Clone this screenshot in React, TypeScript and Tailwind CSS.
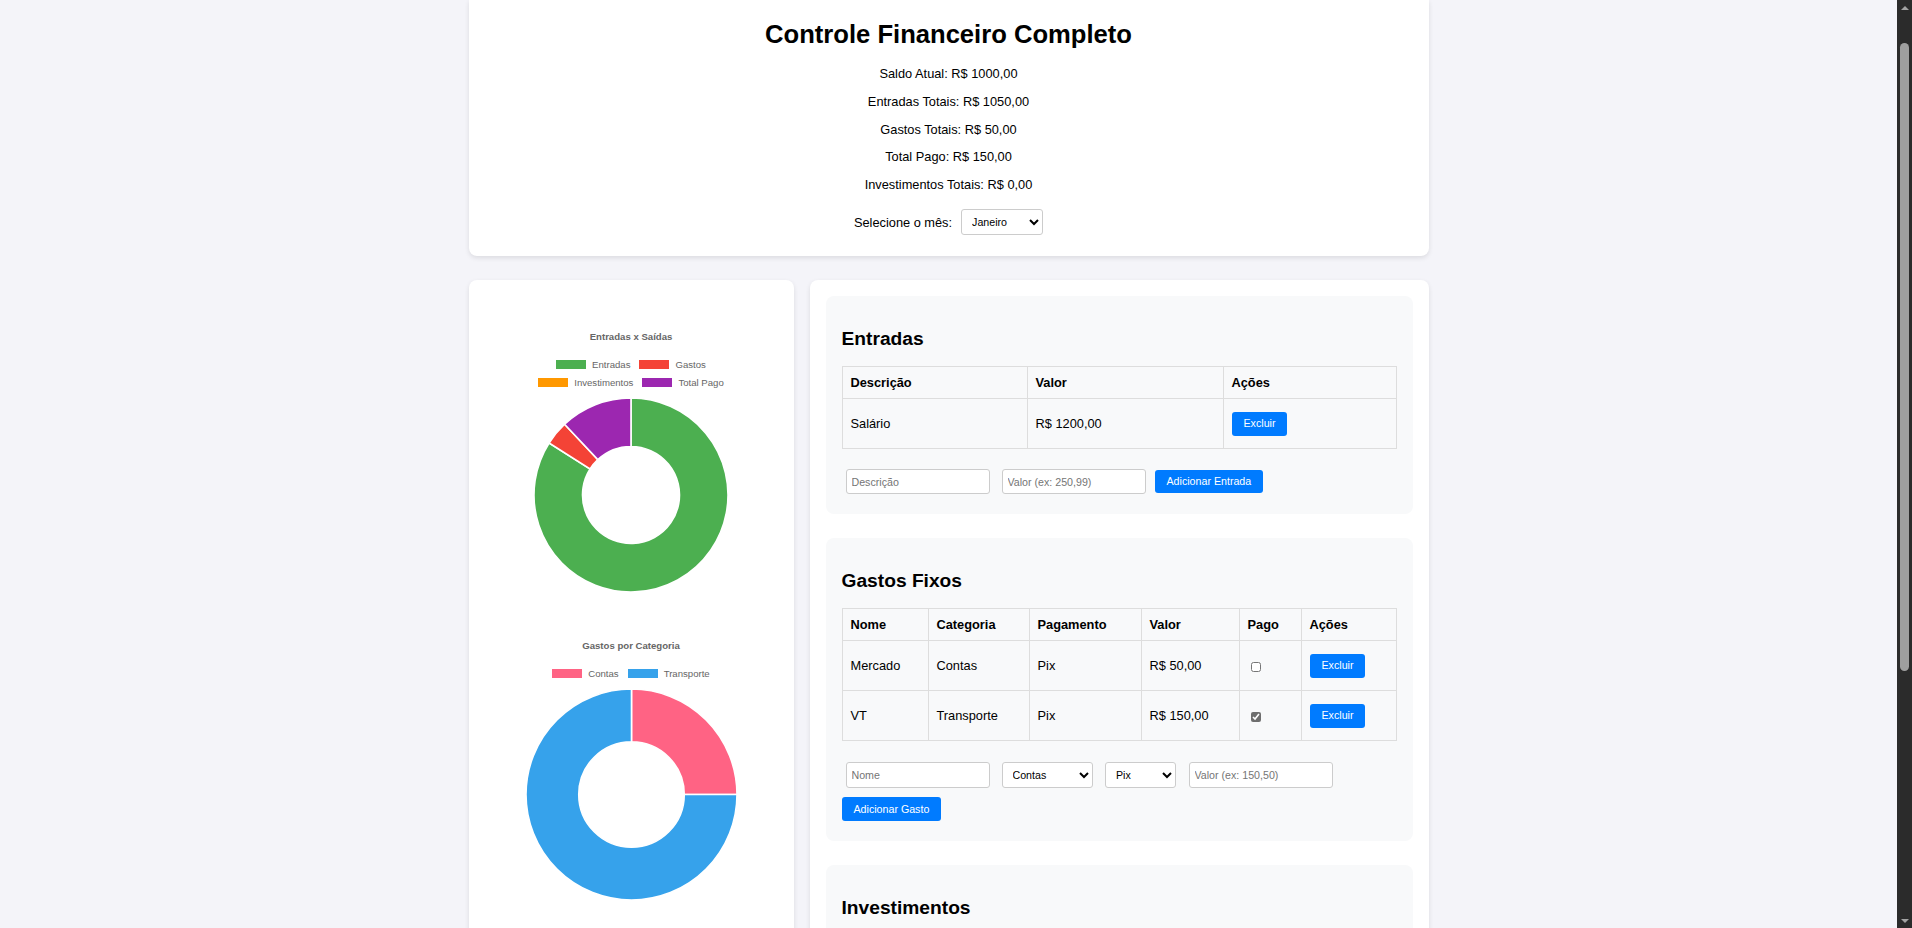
import React from "react";

type Slice = { label: string; value: number; color: string };

const resumo = [
  "Saldo Atual: R$ 1000,00",
  "Entradas Totais: R$ 1050,00",
  "Gastos Totais: R$ 50,00",
  "Total Pago: R$ 150,00",
  "Investimentos Totais: R$ 0,00",
];

const gastos = [
  { nome: "Mercado", categoria: "Contas", pagamento: "Pix", valor: "R$ 50,00", pago: false },
  { nome: "VT", categoria: "Transporte", pagamento: "Pix", valor: "R$ 150,00", pago: true },
];

function arcPath(cx: number, cy: number, r: number, ir: number, a0: number, a1: number) {
  const large = a1 - a0 > Math.PI ? 1 : 0;
  const pt = (rad: number, a: number) =>
    `${(cx + rad * Math.cos(a)).toFixed(2)} ${(cy + rad * Math.sin(a)).toFixed(2)}`;
  return `M ${pt(r, a0)} A ${r} ${r} 0 ${large} 1 ${pt(r, a1)} L ${pt(ir, a1)} A ${ir} ${ir} 0 ${large} 0 ${pt(ir, a0)} Z`;
}

function Donut({ data, size }: { data: Slice[]; size: number }) {
  const total = data.reduce((s, d) => s + d.value, 0);
  const r = size / 2 - 1;
  const c = size / 2;
  let a = -Math.PI / 2;
  return (
    <svg width={size} height={size} viewBox={`0 0 ${size} ${size}`}>
      {data.map((d) => {
        if (!d.value) return null;
        const a0 = a;
        const a1 = a + (d.value / total) * Math.PI * 2;
        a = a1;
        return (
          <path
            key={d.label}
            d={arcPath(c, c, r, r / 2, a0, a1)}
            fill={d.color}
            stroke="#fff"
            strokeWidth={1.6}
          />
        );
      })}
    </svg>
  );
}

function Legend({ items }: { items: Slice[] }) {
  return (
    <div className="flex items-center justify-center gap-[9px] h-[11.5px]">
      {items.map((d) => (
        <div key={d.label} className="flex items-center gap-[6px]">
          <span className="w-[30px] h-[9px]" style={{ backgroundColor: d.color }} />
          <span className="text-[9.6px] leading-[11.5px] text-[#666]">{d.label}</span>
        </div>
      ))}
    </div>
  );
}

function Chart({ title, rows, size }: { title: string; rows: Slice[][]; size: number }) {
  return (
    <div className="flex flex-col items-center h-[259px]">
      <div className="text-[9.6px] leading-[11.5px] font-bold text-[#666]">{title}</div>
      <div className="mt-[16px] flex flex-col gap-[6.5px]">
        {rows.map((row, i) => (
          <Legend key={i} items={row} />
        ))}
      </div>
      <div className="mt-[8.5px]">
        <Donut data={rows.flat()} size={size} />
      </div>
    </div>
  );
}

function Btn({ children }: { children: React.ReactNode }) {
  return (
    <button className="h-[24px] px-[12px] rounded-[3px] bg-[#007bff] text-white text-[10.67px] leading-none whitespace-nowrap">
      {children}
    </button>
  );
}

function Field({ placeholder }: { placeholder: string }) {
  return (
    <input
      placeholder={placeholder}
      className="w-[144px] h-[25px] border border-[#ccc] rounded-[3px] bg-white px-[5px] text-[10.67px] placeholder:text-[#757575] outline-none"
    />
  );
}

function Select({ options, width }: { options: string[]; width: string }) {
  return (
    <select
      className={`${width} h-[26px] border border-[#ccc] rounded-[3px] bg-white pl-[6px] pr-[2px] text-[10.67px] text-black`}
    >
      {options.map((o) => (
        <option key={o}>{o}</option>
      ))}
    </select>
  );
}

function Section({ title, children }: { title: string; children: React.ReactNode }) {
  return (
    <section className="bg-[#f8f9fa] rounded-[8px] px-[16px] pt-[32px] pb-[20px] mb-[24px]">
      <h2 className="text-[19.2px] leading-[22px] font-bold mb-[16px]">{title}</h2>
      {children}
    </section>
  );
}

// barra de rolagem escura do navegador
function Scrollbar() {
  return (
    <div className="fixed top-0 right-0 h-screen w-[15px] bg-[#2b2b2b] flex flex-col items-center">
      <div className="h-[15px] flex items-center justify-center">
        <span className="w-0 h-0 border-x-[4px] border-x-transparent border-b-[4px] border-b-[#a3a3a3]" />
      </div>
      <div className="mt-[28px] w-[9px] h-[628px] rounded-full bg-[#9f9f9f]" />
      <div className="flex-1" />
      <div className="h-[15px] flex items-center justify-center">
        <span className="w-0 h-0 border-x-[4px] border-x-transparent border-t-[4px] border-t-[#a3a3a3]" />
      </div>
    </div>
  );
}

export default function App() {
  const mes = ["Janeiro", "Fevereiro", "Março", "Abril", "Maio", "Junho", "Julho", "Agosto", "Setembro", "Outubro", "Novembro", "Dezembro"];

  return (
    <div className="min-h-screen bg-[#f4f4f9] pr-[15px] font-['Liberation_Sans',Arial,sans-serif] text-[12.8px] text-black">
      <div className="mx-auto w-[960px] pb-[40px]">
        <header className="bg-white rounded-b-[8px] shadow-[0_2px_5px_rgba(0,0,0,0.1)] pt-[20px] pb-[21px] flex flex-col items-center">
          <h1 className="text-[25.6px] leading-[29px] font-bold">Controle Financeiro Completo</h1>
          <div className="mt-[17px] flex flex-col items-center gap-[12.8px]">
            {resumo.map((t) => (
              <p key={t} className="leading-[15px]">
                {t}
              </p>
            ))}
          </div>
          <div className="mt-[17px] flex items-center gap-[9px]">
            <label>Selecione o mês:</label>
            <Select options={mes} width="w-[82px]" />
          </div>
        </header>

        <div className="mt-[24px] flex items-start gap-[16px]">
          <aside className="w-[325px] shrink-0 bg-white rounded-[8px] shadow-[0_2px_5px_rgba(0,0,0,0.1)] pt-[51px] pb-[60px] flex flex-col gap-[50px]">
            <Chart
              title="Entradas x Saídas"
              size={196}
              rows={[
                [
                  { label: "Entradas", value: 1050, color: "#4CAF50" },
                  { label: "Gastos", value: 50, color: "#F44336" },
                ],
                [
                  { label: "Investimentos", value: 0, color: "#FF9800" },
                  { label: "Total Pago", value: 150, color: "#9C27B0" },
                ],
              ]}
            />
            <Chart
              title="Gastos por Categoria"
              size={213}
              rows={[
                [
                  { label: "Contas", value: 50, color: "#FF6384" },
                  { label: "Transporte", value: 150, color: "#36A2EB" },
                ],
              ]}
            />
          </aside>

          <main className="flex-1 bg-white rounded-[8px] shadow-[0_2px_5px_rgba(0,0,0,0.1)] p-[16px] pb-[0px]">
            <Section title="Entradas">
              <table className="w-full table-fixed border-collapse">
                <thead>
                  <tr>
                    <th className="border border-[#ddd] px-[8px] h-[32px] text-left font-bold w-[185px]">Descrição</th>
                    <th className="border border-[#ddd] px-[8px] h-[32px] text-left font-bold w-[196px]">Valor</th>
                    <th className="border border-[#ddd] px-[8px] h-[32px] text-left font-bold">Ações</th>
                  </tr>
                </thead>
                <tbody>
                  <tr>
                    <td className="border border-[#ddd] px-[8px] h-[50px]">Salário</td>
                    <td className="border border-[#ddd] px-[8px] h-[50px]">R$ 1200,00</td>
                    <td className="border border-[#ddd] px-[8px] h-[50px]">
                      <Btn>Excluir</Btn>
                    </td>
                  </tr>
                </tbody>
              </table>
              <div className="mt-[20px] pl-[4px] flex items-center">
                <Field placeholder="Descrição" />
                <div className="ml-[12px]">
                  <Field placeholder="Valor (ex: 250,99)" />
                </div>
                <div className="ml-[9px] h-[23px] flex">
                  <button className="h-[23px] px-[12px] rounded-[3px] bg-[#007bff] text-white text-[10.67px] leading-none">
                    Adicionar Entrada
                  </button>
                </div>
              </div>
            </Section>

            <Section title="Gastos Fixos">
              <table className="w-full table-fixed border-collapse">
                <thead>
                  <tr>
                    <th className="border border-[#ddd] px-[8px] h-[32px] text-left font-bold w-[86px]">Nome</th>
                    <th className="border border-[#ddd] px-[8px] h-[32px] text-left font-bold w-[101px]">Categoria</th>
                    <th className="border border-[#ddd] px-[8px] h-[32px] text-left font-bold w-[112px]">Pagamento</th>
                    <th className="border border-[#ddd] px-[8px] h-[32px] text-left font-bold w-[98px]">Valor</th>
                    <th className="border border-[#ddd] px-[8px] h-[32px] text-left font-bold w-[62px]">Pago</th>
                    <th className="border border-[#ddd] px-[8px] h-[32px] text-left font-bold">Ações</th>
                  </tr>
                </thead>
                <tbody>
                  {gastos.map((g) => (
                    <tr key={g.nome}>
                      <td className="border border-[#ddd] px-[8px] h-[50px]">{g.nome}</td>
                      <td className="border border-[#ddd] px-[8px] h-[50px]">{g.categoria}</td>
                      <td className="border border-[#ddd] px-[8px] h-[50px]">{g.pagamento}</td>
                      <td className="border border-[#ddd] px-[8px] h-[50px]">{g.valor}</td>
                      <td className="border border-[#ddd] px-[8px] h-[50px]">
                        <input
                          type="checkbox"
                          defaultChecked={g.pago}
                          className="ml-[3px] w-[10px] h-[10px] align-middle accent-[#6e6e6e]"
                        />
                      </td>
                      <td className="border border-[#ddd] px-[8px] h-[50px]">
                        <Btn>Excluir</Btn>
                      </td>
                    </tr>
                  ))}
                </tbody>
              </table>
              <div className="mt-[21px] pl-[4px] flex items-center">
                <input
                  placeholder="Nome"
                  className="w-[144px] h-[26px] border border-[#ccc] rounded-[3px] bg-white px-[5px] text-[10.67px] placeholder:text-[#757575] outline-none"
                />
                <div className="ml-[12px] flex">
                  <Select options={["Contas", "Transporte", "Lazer", "Saúde"]} width="w-[91px]" />
                </div>
                <div className="ml-[12.5px] flex">
                  <Select options={["Pix", "Cartão", "Dinheiro"]} width="w-[71px]" />
                </div>
                <input
                  placeholder="Valor (ex: 150,50)"
                  className="ml-[12.5px] w-[144px] h-[26px] border border-[#ccc] rounded-[3px] bg-white px-[5px] text-[10.67px] placeholder:text-[#757575] outline-none"
                />
              </div>
              <div className="mt-[9px] flex">
                <Btn>Adicionar Gasto</Btn>
              </div>
            </Section>

            <Section title="Investimentos">
              <table className="w-full table-fixed border-collapse">
                <thead>
                  <tr>
                    <th className="border border-[#ddd] px-[8px] h-[32px] text-left font-bold w-[185px]">Descrição</th>
                    <th className="border border-[#ddd] px-[8px] h-[32px] text-left font-bold w-[196px]">Valor</th>
                    <th className="border border-[#ddd] px-[8px] h-[32px] text-left font-bold">Ações</th>
                  </tr>
                </thead>
                <tbody />
              </table>
              <div className="mt-[20px] pl-[4px] flex items-center">
                <Field placeholder="Descrição" />
                <div className="ml-[12px]">
                  <Field placeholder="Valor (ex: 100,00)" />
                </div>
                <div className="ml-[9px] flex">
                  <Btn>Adicionar Investimento</Btn>
                </div>
              </div>
            </Section>
          </main>
        </div>
      </div>
      <Scrollbar />
    </div>
  );
}
